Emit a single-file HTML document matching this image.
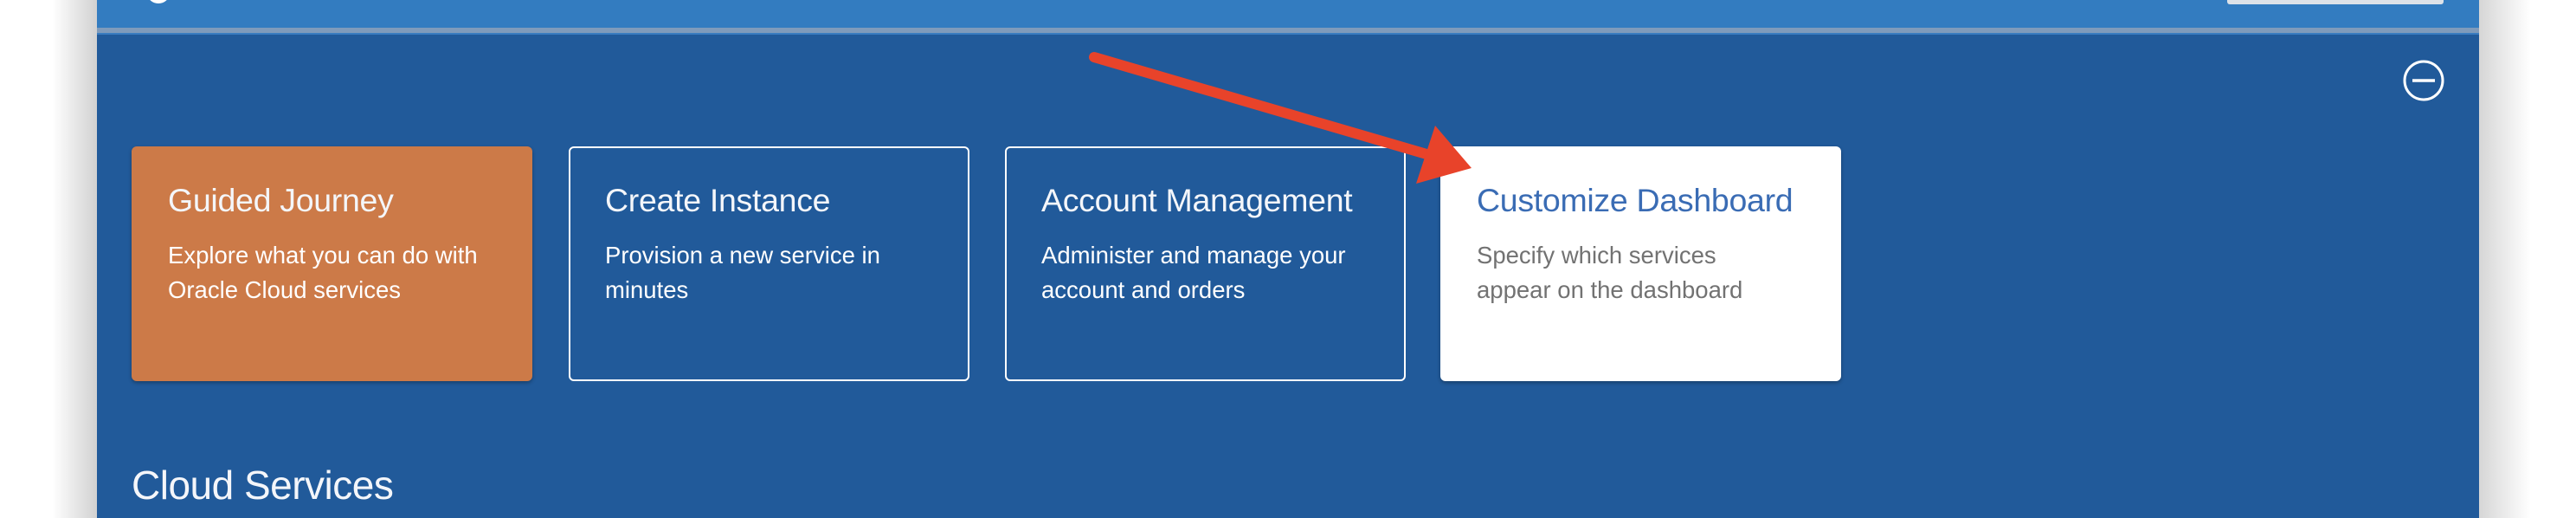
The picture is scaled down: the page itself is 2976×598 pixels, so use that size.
<!DOCTYPE html>
<html><head><meta charset="utf-8"><style>
html,body{margin:0;padding:0;}
body{width:2976px;height:598px;background:#fff;position:relative;overflow:hidden;font-family:"Liberation Sans",Arial,sans-serif;}
.shadowL{position:absolute;left:60px;top:0;width:52px;height:598px;background:linear-gradient(to right,rgba(0,0,0,0),rgba(0,0,0,0.18));}
.shadowR{position:absolute;left:2864px;top:0;width:60px;height:598px;background:linear-gradient(to left,rgba(0,0,0,0),rgba(0,0,0,0.16));}
.panel{position:absolute;left:112px;top:0;width:2752px;height:598px;background:#215a9a;}
.hdr{position:absolute;left:0;top:0;width:100%;height:32px;background:#337cc0;}
.hline{position:absolute;left:0;top:32px;width:100%;height:6px;background:#7f9bbb;}
.hline2{position:absolute;left:0;top:38px;width:100%;height:2px;background:#3a7dc0;}
.search{position:absolute;left:2461px;top:-6px;width:250px;height:11px;background:#dde2e8;border-radius:3px;}
.logo{position:absolute;left:58px;top:-20px;width:26px;height:24px;border-radius:50%;background:#fff;}
.card{position:absolute;top:169px;width:463px;height:271px;border-radius:6px;box-sizing:border-box;padding:40px 42px;color:#fff;}
.card h2{margin:0;font-weight:normal;font-size:37.5px;line-height:44px;letter-spacing:-0.3px;}
.card p{margin:22px 0 0;font-size:27.5px;line-height:40px;}
.c1{left:40px;background:#cc7a48;box-shadow:0 2px 4px rgba(0,0,0,0.3);}
.c2{left:545px;border:2px solid #fff;padding:38px 40px;}
.c3{left:1049px;border:2px solid #fff;padding:38px 40px;}
.c4{left:1552px;background:#fff;box-shadow:0 2px 4px rgba(0,0,0,0.3);}
.c4 h2{color:#3a6cb4;}
.c4 p{color:#727272;}
.c1 h2,.c2 h2,.c3 h2{color:#f4f6fa;}
.cs{position:absolute;left:40px;top:533px;color:#f4f6fa;font-size:46px;letter-spacing:-0.5px;}
</style></head><body>
<div class="shadowL"></div><div class="shadowR"></div>
<div class="panel">
<div class="hdr"></div><div class="hline"></div><div class="hline2"></div>
<div class="search"></div><div class="logo"></div>
<svg style="position:absolute;left:2664px;top:69px" width="48" height="48" viewBox="0 0 48 48"><circle cx="24" cy="24" r="22" fill="none" stroke="#fff" stroke-width="3"/><line x1="11" y1="24" x2="37" y2="24" stroke="#fff" stroke-width="3.5"/></svg>
<div class="card c1"><h2>Guided Journey</h2><p>Explore what you can do with<br>Oracle Cloud services</p></div>
<div class="card c2"><h2>Create Instance</h2><p>Provision a new service in<br>minutes</p></div>
<div class="card c3"><h2>Account Management</h2><p>Administer and manage your<br>account and orders</p></div>
<div class="card c4"><h2>Customize Dashboard</h2><p>Specify which services<br>appear on the dashboard</p></div>
<div class="cs">Cloud Services</div>
</div>
<svg style="position:absolute;left:0;top:0" width="2976" height="598">
<line x1="1264" y1="66" x2="1655" y2="180" stroke="#e8432a" stroke-width="12" stroke-linecap="round"/>
<polygon points="1658,145 1636,212 1700,194" fill="#e8432a"/>
</svg>
</body></html>
